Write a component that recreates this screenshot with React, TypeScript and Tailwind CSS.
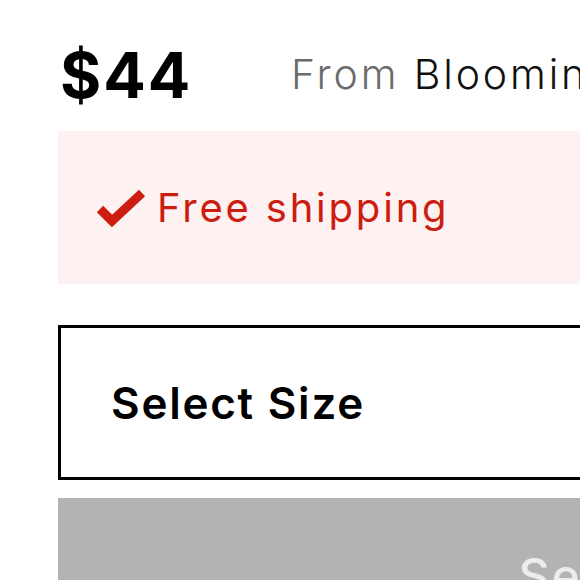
import React from "react"

// --- Sub-Components ---
const CheckMark = () => (
    <svg width="50" height="40" viewBox="0 0 50 40" className="shrink-0" aria-hidden="true">
        <polyline
            points="4,21 16,33 46,5"
            fill="none"
            stroke="#cc1d10"
            strokeWidth="9"
            strokeLinecap="butt"
            strokeLinejoin="miter"
        />
    </svg>
)

export default function App() {
    return (
        <div className="w-[580px] h-[580px] overflow-hidden bg-white font-['Inter','Liberation_Sans',sans-serif]">
            <div className="w-[1254px] pl-[58px] pt-[30px] flex flex-col">
                <div className="flex items-center h-[90px]">
                    <span className="w-[233px] pl-[2px] text-[63px] font-bold text-black tracking-[0.03em]">$44</span>
                    <span className="text-[41px] font-light text-[#111] tracking-[0.07em] whitespace-nowrap">
                        <span className="text-[#6b6b6b]">From </span>Bloomingdale's
                    </span>
                </div>

                <div className="mt-[11px] h-[153px] bg-[#fdf1f1] flex items-center pl-[38px] gap-[11px]">
                    <CheckMark />
                    <span className="text-[40px] text-[#cc1d10] tracking-[0.07em]">Free shipping</span>
                </div>

                <button className="mt-[41px] h-[155px] border-[3px] border-black bg-white flex items-center pl-[50px] text-left">
                    <span className="text-[44px] font-semibold text-black tracking-[0.04em]">Select Size</span>
                </button>

                <button className="mt-[18px] h-[155px] bg-[#b3b3b3] flex items-center justify-center">
                    <span className="text-[48px] font-medium text-[#ececec] tracking-[0.04em]">Select Size</span>
                </button>
            </div>
        </div>
    )
}
